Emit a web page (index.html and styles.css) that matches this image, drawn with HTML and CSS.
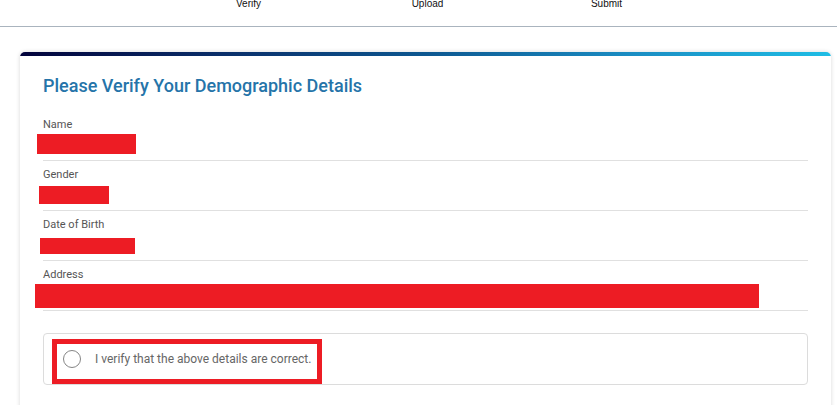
FILE: index.html
```html
<!DOCTYPE html>
<html lang="en">
<head>
<meta charset="utf-8">
<title>Verify Demographic Details</title>
<link rel="stylesheet" href="styles.css">
</head>
<body>
<header class="stepper">
  <div class="steps">
    <span class="step">Verify</span>
    <span class="step">Upload</span>
    <span class="step">Submit</span>
  </div>
</header>

<main class="card">
  <div class="card-bar"></div>
  <div class="card-body">
    <h1 class="title">Please Verify Your Demographic Details</h1>

    <div class="field">
      <div class="field-label">Name</div>
      <div class="redact" style="margin-top:2px;margin-left:-6px;width:99px;height:20px"></div>
    </div>
    <div class="field">
      <div class="field-label">Gender</div>
      <div class="redact" style="margin-top:4px;margin-left:-4px;width:70px;height:18px"></div>
    </div>
    <div class="field">
      <div class="field-label">Date of Birth</div>
      <div class="redact" style="margin-top:6px;margin-left:-3px;width:95px;height:16px"></div>
    </div>
    <div class="field">
      <div class="field-label">Address</div>
      <div class="redact" style="margin-top:2px;margin-left:-8px;width:724px;height:24px"></div>
    </div>

    <div class="confirm-box">
      <label class="confirm-mark">
        <span class="radio"></span>
        <span class="confirm-text">I verify that the above details are correct.</span>
      </label>
    </div>
  </div>
</main>
</body>
</html>
```

FILE: styles.css
```css
html, body {
  margin: 0;
  padding: 0;
  background: #ffffff;
}

body {
  font-family: Roboto, "Noto Sans", Arial, sans-serif;
  width: 837px;
  height: 405px;
  overflow: hidden;
}

.stepper {
  height: 26px;
  border-bottom: 1px solid #aab4be;
}

.steps {
  display: flex;
  padding-left: 159px;
}

.step {
  width: 179px;
  text-align: center;
  font-family: "Liberation Sans", Arial, sans-serif;
  font-size: 10px;
  line-height: 8px;
  color: #111111;
}

.card {
  display: block;
  margin: 25px 0 0 20px;
  width: 811px;
  height: 360px;
  background: #ffffff;
  border-radius: 5px 5px 0 0;
  box-shadow: 0 0 4px rgba(0, 0, 0, 0.16);
  overflow: hidden;
}

.card-bar {
  height: 4px;
  background: linear-gradient(90deg, #02033b 0%, #0a2f6a 25%, #0d5790 50%, #1a8cc2 75%, #1fbde5 100%);
}

.card-body {
  padding: 18px 23px 0 23px;
}

.title {
  margin: 0 0 20px 0;
  font-size: 18px;
  line-height: 24px;
  font-weight: 500;
  color: #2574a9;
}

.field {
  height: 42px;
  border-bottom: 1px solid #e0e0e0;
  margin-bottom: 7px;
}

.field-label {
  font-size: 11px;
  line-height: 14px;
  color: #555555;
}

.redact {
  background: #ed1c24;
}

.confirm-box {
  margin-top: 22px;
  height: 45px;
  border: 1px solid #dcdcdc;
  border-radius: 4px;
  padding: 5px 0 0 8px;
}

.confirm-mark {
  display: flex;
  align-items: center;
  gap: 14px;
  box-sizing: border-box;
  width: 270px;
  height: 45px;
  border: 5px solid #ed1c24;
  padding: 0 0 6px 6px;
}

.radio {
  width: 18px;
  height: 18px;
  box-sizing: border-box;
  border: 1px solid #858585;
  border-radius: 50%;
  background: #ffffff;
  flex: none;
}

.confirm-text {
  font-size: 12px;
  line-height: 18px;
  color: #666666;
}
```
